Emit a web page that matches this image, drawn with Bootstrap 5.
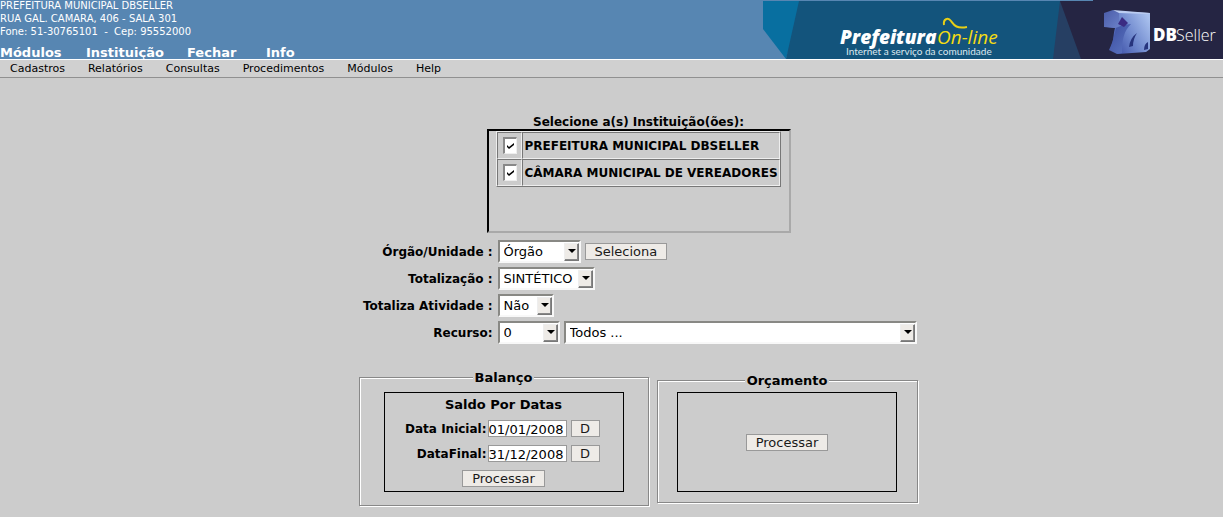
<!DOCTYPE html>
<html lang="pt-BR">
<head>
<meta charset="utf-8">
<meta name="viewport" content="width=device-width, initial-scale=1">
<title>Prefeitura On-line</title>
<link href="https://cdn.jsdelivr.net/npm/bootstrap@5.3.0/dist/css/bootstrap.min.css" rel="stylesheet">
<style>
body { background: #ccc; color: #000; font: 13px/15px "DejaVu Sans", sans-serif; }
a { color: inherit; text-decoration: none; }
.topbar { background: #5786b2; color: #fff; border-bottom: 1px solid #fff; }
.address { font-size: 10px; line-height: 13px; font-style: normal; height: 46px; margin-top: -1px; }
.mainnav { font-weight: bold; line-height: 16px; height: 14px; }
.mainnav li:nth-child(1) { width: 86px; }
.mainnav li:nth-child(2) { width: 101px; }
.mainnav li:nth-child(3) { width: 79px; }
.brand { width: 460px; height: 59px; }
.menubar { background: #d0d0d0; border-bottom: 1px solid #909090; font-size: 11px; line-height: 17px; padding-left: 10px; gap: 23px; }
.page { padding: 36px 0 10px 54px; }
.content { max-width: 560px; }
.inst-title { font-size: 12px; line-height: 13px; padding-top: 2px; }
.inst-box { width: 304px; height: 104px; border: 2px solid; border-color: #000 #a9a9a9 #a9a9a9 #000; }
.inst-table { border: 1px solid; border-color: #eee #777 #777 #eee; border-collapse: separate; border-spacing: 0; width: 281px; font-size: 12px; font-weight: bold; }
.inst-table td { border: 1px solid; border-color: #777 #eee #eee #777; height: 27px; padding: 1px 1px 0; white-space: nowrap; }
.inst-table td:first-child { width: 25px; min-width: 25px; padding: 0 4px; }
.tick { appearance: none; display: block; width: 14px; height: 17px; margin: 0 auto; background: #fff; border: solid; border-color: #888 #eee #eee #888; border-width: 2px 1px 1px 2px; }
.tick:checked { background: #fff url("data:image/svg+xml,%3Csvg xmlns='http://www.w3.org/2000/svg' viewBox='0 0 7 7'%3E%3Cpath d='M0 2l2 2 5-4v2L2 6 0 4z'/%3E%3C/svg%3E") center / 7px 7px no-repeat; }
.filters { display: grid; grid-template-columns: 134px 1fr; column-gap: 5px; row-gap: 4px; margin-top: 7px; }
.filters > label { text-align: right; font-size: 12px; font-weight: bold; line-height: 22px; padding-top: 1px; white-space: nowrap; }
.drop { position: relative; display: block; height: 23px; }
.drop select { appearance: none; display: block; width: 100%; height: 23px; padding: 1px 18px 0 4px; background: #fff; color: #000; font-size: 13px; line-height: 18px; border: 2px solid; border-color: #888884 #f8f8f8 #f8f8f8 #888884; border-radius: 0; }
.drop::after { content: ""; position: absolute; right: 2px; top: 3px; width: 15px; height: 18px; pointer-events: none; border: 1px solid; border-color: #eee #777 #777 #eee; box-shadow: inset -1px -1px #888; background: #eeebe7 url("data:image/svg+xml,%3Csvg xmlns='http://www.w3.org/2000/svg' viewBox='0 0 8 4'%3E%3Cpath d='M0 0h8L4 4z'/%3E%3C/svg%3E") 3px 5px / 8px 4px no-repeat; }
.w-orgao { width: 83px; }
.w-total { width: 97px; }
.w-ativ { width: 56px; }
.w-rec { width: 62px; }
.w-todos { width: 353px; }
.push { height: 17px; padding: 1px 9px 0; line-height: 14px; font-size: 13px; background: #eeebe7; color: #1a1a1a; border: 1px solid #999; border-radius: 0; display: flex; align-items: center; justify-content: center; }
.groups { margin-top: 25px; gap: 8px; }
.group-box { border: 1px solid #888; box-shadow: 1px 1px #fff, inset 1px 1px #fff; }
.group-box legend { float: none; width: auto; margin: 0 auto; padding: 1px 2px 0; font-size: 13px; line-height: 15px; font-weight: bold; background: #ccc; }
.balanco { width: 290px; height: 137px; }
.orcamento { width: 261px; height: 131px; margin-top: 3px; }
.frame { border: 1px solid #000; height: 100px; margin: 7px auto 0; }
.balanco .frame { width: 240px; padding-top: 4px; }
.orcamento .frame { width: 220px; margin-top: 4px; }
.dates { display: grid; grid-template-columns: 99px 79px 29px; column-gap: 4px; row-gap: 8px; font-weight: bold; margin-top: 8px; }
.dates label { text-align: right; font-size: 12px; line-height: 16px; padding-top: 1px; margin-right: -3px; white-space: nowrap; }
.dates input { width: 79px; height: 17px; padding: 2px 0 0; border: 1px solid #999; background: #fff; font-size: 13px; line-height: 14px; color: #000; }
.dates .push { width: 29px; padding: 1px 0 0; }
</style>
</head>
<body>
<header class="topbar d-flex justify-content-between overflow-hidden">
  <div class="flex-shrink-0">
    <address class="address mb-0">PREFEITURA MUNICIPAL DBSELLER<br>RUA GAL. CAMARA, 406 - SALA 301<br>Fone: 51-30765101 &nbsp;-&nbsp; Cep: 95552000</address>
    <ul class="mainnav list-unstyled d-flex mb-0">
      <li><a href="#">Módulos</a></li><li><a href="#">Instituição</a></li><li><a href="#">Fechar</a></li><li><a href="#">Info</a></li>
    </ul>
  </div>
  <svg class="brand flex-shrink-0" viewBox="0 0 460 59" role="img" aria-label="Prefeitura On-line DBSeller">
    <defs>
      <linearGradient id="cube" x1="0" y1="0.8" x2="1" y2="0.2"><stop offset="0" stop-color="#3547a0"/><stop offset=".5" stop-color="#6d86cc"/><stop offset="1" stop-color="#a9c1ee"/></linearGradient>
      <linearGradient id="side" x1="0" y1="0" x2="1" y2="1"><stop offset="0" stop-color="#4a5ca8"/><stop offset="1" stop-color="#6a80c8"/></linearGradient>
      <linearGradient id="fold" x1="0" y1="0" x2="1" y2="1"><stop offset="0" stop-color="#3a4c9e"/><stop offset="1" stop-color="#5f78c4"/></linearGradient>
    </defs>
    <path d="M0 1h40L23 59 0 29z" fill="#086fa0"/>
    <path d="M36 1h264v58H23z" fill="#13547c"/>
    <path d="M297 1h8l16 58h-31z" fill="#263f63"/>
    <path d="M297 1h33V0h130v59H318z" fill="#252543"/>
    <g font-family="Open Sans, sans-serif" font-style="italic" font-size="19">
      <text x="77" y="44" font-weight="800" fill="#fff">Prefeitura</text>
      <text x="174" y="44" fill="#f5dc13" font-weight="500">On-line</text>
    </g>
    <path d="M181 25c-1-6 4-8 7-4s5 8 16 6" fill="none" stroke="#e8cf16" stroke-width="2"/>
    <text x="83" y="55" font-family="Lato, sans-serif" font-size="10" fill="#dce8ef">Internet a serviço da comunidade</text>
    <path d="M350 11l37 2v36l-4 3-28 2-8-5c4-8 3-14 5-21l-8-1V13z" fill="url(#cube)"/>
    <path d="M341 13l9-3 6 2v14l-4 2-11-1z" fill="url(#side)"/>
    <path d="M350 10l37 3-2 1-29-1z" fill="#bccdf2"/>
    <path d="M353 28l7-3 8-1c-7 7-9 15-9 29l-5 1-8-4c4-8 5-14 7-22z" fill="url(#fold)"/>
    <path d="M359 17l6 6-4 4-6-3z" fill="#3b2b82"/>
    <path d="M374 33q-7 5-8 14l4-1q0-7 4-13zM385 42q-4 2-4 8l4-1z" fill="#27347d"/>
    <g font-family="Open Sans, sans-serif" fill="#fff">
      <text x="390" y="41" font-size="17" font-weight="800">DB</text>
      <text x="413" y="41" font-size="16" font-weight="300">Seller</text>
    </g>
  </svg>
</header>
<nav class="menubar d-flex">
  <a href="#">Cadastros</a><a href="#">Relatórios</a><a href="#">Consultas</a><a href="#">Procedimentos</a><a href="#">Módulos</a><a href="#">Help</a>
</nav>
<main class="page">
  <form class="content mx-auto">
    <div class="inst-title text-center fw-bold" id="instTitle">Selecione a(s) Instituição(ões):</div>
    <div class="inst-box mx-auto">
      <table class="inst-table mx-auto" aria-labelledby="instTitle">
        <tr><td><input class="tick" type="checkbox" id="i1" checked></td><td><label for="i1">PREFEITURA MUNICIPAL DBSELLER</label></td></tr>
        <tr><td><input class="tick" type="checkbox" id="i2" checked></td><td><label for="i2">CÂMARA MUNICIPAL DE VEREADORES</label></td></tr>
      </table>
    </div>
    <div class="filters">
      <label for="orgao">Órgão/Unidade :</label>
      <div class="d-flex gap-1 align-items-center">
        <span class="drop w-orgao"><select id="orgao"><option>Órgão</option><option>Unidade</option></select></span>
        <button class="push" type="button">Seleciona</button>
      </div>
      <label for="total">Totalização :</label>
      <span class="drop w-total"><select id="total"><option>SINTÉTICO</option></select></span>
      <label for="ativ">Totaliza Atividade :</label>
      <span class="drop w-ativ"><select id="ativ"><option>Não</option><option>Sim</option></select></span>
      <label for="rec">Recurso:</label>
      <div class="d-flex gap-1">
        <span class="drop w-rec"><select id="rec"><option>0</option></select></span>
        <span class="drop w-todos"><select aria-label="Recurso"><option>Todos ...</option></select></span>
      </div>
    </div>
    <div class="groups d-flex align-items-start">
      <fieldset class="group-box balanco flex-shrink-0">
        <legend>Balanço</legend>
        <div class="frame">
          <div class="text-center fw-bold">Saldo Por Datas</div>
          <div class="dates">
            <label for="d1">Data Inicial:</label><input id="d1" type="text" value="01/01/2008"><button class="push" type="button">D</button>
            <label for="d2">DataFinal:</label><input id="d2" type="text" value="31/12/2008"><button class="push" type="button">D</button>
          </div>
          <button class="push mx-auto mt-2" type="button">Processar</button>
        </div>
      </fieldset>
      <fieldset class="group-box orcamento flex-shrink-0">
        <legend>Orçamento</legend>
        <div class="frame d-flex align-items-center justify-content-center">
          <button class="push" type="button">Processar</button>
        </div>
      </fieldset>
    </div>
  </form>
</main>
<script src="https://cdn.jsdelivr.net/npm/bootstrap@5.3.0/dist/js/bootstrap.bundle.min.js"></script>
</body>
</html>
